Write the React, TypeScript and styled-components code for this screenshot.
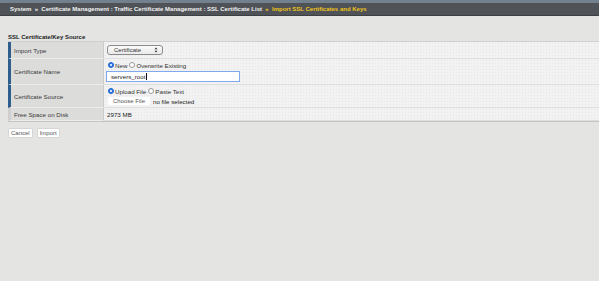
import React from "react";
import styled, { createGlobalStyle } from "styled-components";

const Global = createGlobalStyle`
  html, body { margin: 0; padding: 0; background: #e4e4e2; }
  body { font-family: "Liberation Sans", Arial, sans-serif; font-size: 6.5px; color: #222; }
  * { box-sizing: border-box; }
`;

const Page = styled.div`
  width: 599px;
  height: 281px;
  background: #e4e4e2;
  overflow: hidden;
`;

const TopStrip = styled.div`
  height: 3px;
  background: #73818f;
`;

const Breadcrumb = styled.div`
  height: 13px;
  background: #4f5357;
  border-bottom: 1px solid #3c3f42;
  display: flex;
  align-items: center;
  padding-left: 10px;
  font-weight: bold;
  font-size: 6px;
  color: #f2f2f2;
  white-space: nowrap;
`;

const Current = styled.span`
  color: #f0c419;
`;

const Content = styled.div`
  padding: 17px 0 0 8px;
`;

const SectionTitle = styled.div`
  font-weight: bold;
  font-size: 6px;
  color: #222;
  height: 8px;
  line-height: 8px;
`;

const Table = styled.div`
  display: grid;
  grid-template-columns: 96px 1fr;
  border-top: 1px solid #cfcfcf;
  border-bottom: 1px solid #c4c4c4;
  background: #f1f1f1;
`;

const Label = styled.div<{ $h: number; $accent?: boolean }>`
  height: ${(p) => p.$h}px;
  display: flex;
  align-items: center;
  padding-left: ${(p) => (p.$accent ? 3 : 3)}px;
  background: #dcdcdb;
  border-left: 3px solid ${(p) => (p.$accent ? "#2f5e8c" : "#cfcfcf")};
  border-bottom: 1px solid #ececec;
  border-right: 1px solid #cbcbcb;
  color: #3a3a3a;
  font-size: 6.2px;
`;

const Value = styled.div<{ $h: number }>`
  height: ${(p) => p.$h}px;
  display: flex;
  flex-direction: column;
  justify-content: center;
  gap: 2px;
  padding-left: 3px;
  border-bottom: 1px solid #dedede;
  background-color: #f2f2f2;
  background-image: radial-gradient(#e6e6e6 0.6px, transparent 0.7px);
  background-size: 3px 3px;
  font-size: 6.2px;
  color: #222;
`;

const Select = styled.div`
  width: 56px;
  height: 10px;
  border: 1px solid #8a8a8a;
  border-radius: 3px;
  background: linear-gradient(#fbfbfb, #e9e9e9);
  display: flex;
  align-items: center;
  justify-content: space-between;
  padding: 0 4px 0 6px;
  font-size: 6px;
  color: #333;
`;

const Arrows = styled.svg`
  width: 4px;
  height: 6px;
`;

const RadioRow = styled.div`
  display: flex;
  align-items: center;
  gap: 1px;
  height: 8px;
  font-size: 6.2px;
  color: #333;
`;

const Radio = styled.span<{ $on?: boolean }>`
  width: 6px;
  height: 6px;
  border-radius: 50%;
  display: inline-flex;
  align-items: center;
  justify-content: center;
  background: ${(p) => (p.$on ? "#2d78e6" : "#fff")};
  border: 1px solid ${(p) => (p.$on ? "#2266cc" : "#9a9a9a")};
  margin-left: 1px;
  &::after {
    content: "";
    width: 2px;
    height: 2px;
    border-radius: 50%;
    background: ${(p) => (p.$on ? "#fff" : "transparent")};
  }
`;

const TextInput = styled.div`
  width: 134px;
  height: 11px;
  border: 1.5px solid #7fa8ee;
  background: #fff;
  display: flex;
  align-items: center;
  padding-left: 4px;
  font-size: 6.2px;
  color: #222;
  margin-left: -1px;
`;

const Caret = styled.span`
  display: inline-block;
  width: 0.6px;
  height: 7px;
  margin-left: 0.5px;
  background: #111;
`;

const FileRow = styled.div`
  display: flex;
  align-items: center;
  gap: 3px;
  height: 8px;
`;

const FileButton = styled.span`
  height: 8px;
  padding: 0 5px;
  background: #fff;
  border-radius: 1px;
  display: inline-flex;
  align-items: center;
  color: #555;
  font-size: 6px;
  margin-left: 1px;
`;

const Actions = styled.div`
  display: flex;
  gap: 4px;
  padding-top: 6px;
`;

const Button = styled.button`
  height: 10px;
  padding: 0 2px;
  border: 1px solid #d6d6d6;
  border-radius: 1px;
  background: #fff;
  font-family: "Liberation Sans", Arial, sans-serif;
  font-size: 6px;
  color: #555;
  line-height: 1;
`;

export default function App() {
  return (
    <Page>
      <Global />
      <TopStrip />
      <Breadcrumb>
        System&nbsp;&nbsp;»&nbsp;&nbsp;Certificate Management : Traffic Certificate Management : SSL Certificate List&nbsp;&nbsp;
        <Current>»&nbsp;&nbsp;Import SSL Certificates and Keys</Current>
      </Breadcrumb>
      <Content>
        <SectionTitle>SSL Certificate/Key Source</SectionTitle>
        <Table>
          <Label $h={17} $accent>Import Type</Label>
          <Value $h={17}>
            <Select>
              <span>Certificate</span>
              <Arrows viewBox="0 0 4 6">
                <path d="M0.5 2.3 L2 0.6 L3.5 2.3 Z M0.5 3.7 L2 5.4 L3.5 3.7 Z" fill="#333" />
              </Arrows>
            </Select>
          </Value>
          <Label $h={26} $accent>Certificate Name</Label>
          <Value $h={26}>
            <RadioRow>
              <Radio $on />
              <span>New</span>
              <Radio />
              <span>Overwrite Existing</span>
            </RadioRow>
            <TextInput>
              servers_root<Caret />
            </TextInput>
          </Value>
          <Label $h={23} $accent>Certificate Source</Label>
          <Value $h={23}>
            <RadioRow>
              <Radio $on />
              <span>Upload File</span>
              <Radio />
              <span>Paste Text</span>
            </RadioRow>
            <FileRow>
              <FileButton>Choose File</FileButton>
              <span>no file selected</span>
            </FileRow>
          </Value>
          <Label $h={13}>Free Space on Disk</Label>
          <Value $h={13}>2973 MB</Value>
        </Table>
        <Actions>
          <Button>Cancel</Button>
          <Button>Import</Button>
        </Actions>
      </Content>
    </Page>
  );
}
